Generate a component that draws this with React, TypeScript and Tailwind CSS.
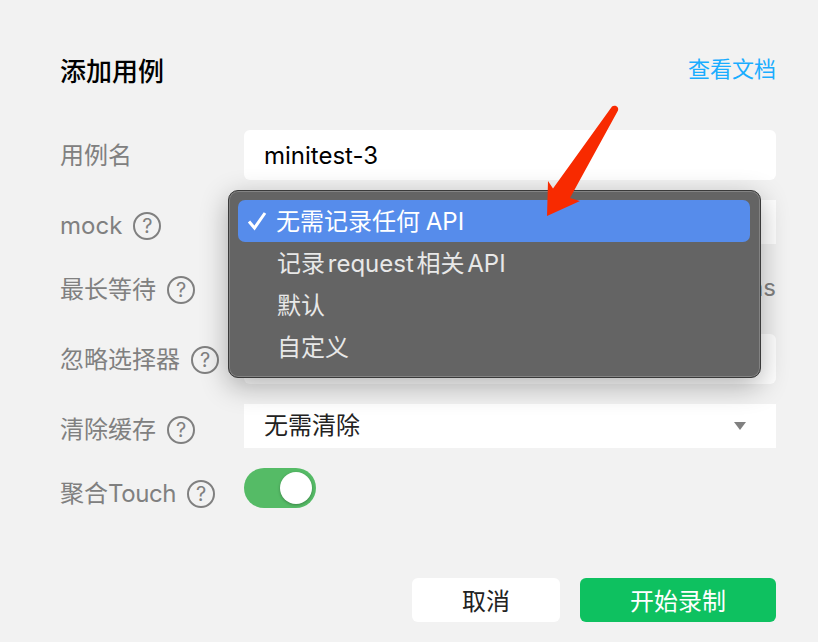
import type { ReactNode } from 'react'

const font = { fontFamily: 'Inter, "Noto Sans CJK SC", sans-serif' }

function Help() {
  return (
    <span className="ml-[11px] flex h-[28px] w-[28px] shrink-0 items-center justify-center rounded-full border-2 border-[#808080] text-[20px] leading-none text-[#808080]">
      ?
    </span>
  )
}

function Label({ text, help = true }: { text: ReactNode; help?: boolean }) {
  return (
    <div className="flex h-[50px] w-[184px] shrink-0 items-center whitespace-nowrap pt-[2px] text-[24px] text-[#808080]">
      <span>{text}</span>
      {help && <Help />}
    </div>
  )
}

function Arrow() {
  return (
    <svg className="absolute left-0 top-0" width="818" height="642" viewBox="0 0 818 642" fill="none">
      <path
        d="M612 106.5C614 104.5 619.5 106 618 110.5L570 198L580 201L547 216L548 181L553 188.5Z"
        fill="#f82a00"
      />
    </svg>
  )
}

function Menu() {
  const items = ['记录 request 相关 API', '默认', '自定义']
  return (
    <div className="absolute left-[228px] top-[190px] h-[188px] w-[533px] rounded-[10px] border border-[#3a3a3a] bg-[#646464] pb-[9px] pl-[9px] pr-[10px] pt-[9px] shadow-[0_8px_28px_rgba(0,0,0,0.3),inset_0_0_0_1px_rgba(255,255,255,0.2)]">
      <div className="flex h-[42px] items-center rounded-[7px] bg-[#568ceb] pt-[2px] text-[24px] text-white [word-spacing:-1px]">
        <svg className="mb-[2px] ml-[9px] mr-[9px]" width="20" height="20" viewBox="0 0 20 20" fill="none">
          <path d="M2 10.5L7.5 17L18 2" stroke="white" strokeWidth="3" />
        </svg>
        <span>无需记录任何 API</span>
      </div>
      {items.map((item) => (
        <div key={item} className="flex h-[42px] items-center pl-[39px] pt-[2px] text-[24px] text-[#e8e8e8] [word-spacing:-4px]">
          {item}
        </div>
      ))}
    </div>
  )
}

function App() {
  return (
    <div className="relative h-[642px] w-[818px] overflow-hidden bg-[#f2f2f2] pl-[60px] pr-[42px]" style={font}>
      <div className="flex h-[130px] items-start justify-between pt-[53px]">
        <h1 className="text-[26px] font-medium leading-[38px] text-black">添加用例</h1>
        <a className="text-[22px] leading-[32px] text-[#1aadff]">查看文档</a>
      </div>

      <div className="flex h-[50px] items-start">
        <Label text="用例名" help={false} />
        <div className="flex h-full flex-1 items-center rounded-[6px] bg-white pl-[20px] pt-[2px] text-[24px] text-black">minitest-3</div>
      </div>

      <div className="mt-[20px] flex h-[44px] items-start">
        <Label text="mock" />
        <div className="h-full flex-1 bg-white" />
      </div>

      <div className="mt-[20px] flex h-[50px] items-start">
        <Label text="最长等待" />
        <div className="flex-1 pt-[6px] text-right text-[24px] text-[#808080]">ms</div>
      </div>

      <div className="mt-[20px] flex h-[50px] items-start">
        <Label text="忽略选择器" />
        <div className="h-full flex-1 rounded-[6px] bg-white" />
      </div>

      <div className="mt-[20px] flex h-[44px] items-start">
        <Label text="清除缓存" />
        <div className="flex h-full flex-1 items-center justify-between bg-white pl-[20px] pr-[30px] text-[24px] text-[#222]">
          <span>无需清除</span>
          <span className="h-0 w-0 border-x-[6px] border-t-[8px] border-x-transparent border-t-[#808080]" />
        </div>
      </div>

      <div className="mt-[20px] flex h-[40px] items-start">
        <Label text={<>聚合<span className="tracking-[-0.4px]">Touch</span></>} />
        <div className="flex h-[40px] w-[72px] items-center justify-end rounded-full bg-[#55bb66] pr-[4px]">
          <span className="h-[32px] w-[32px] rounded-full bg-white shadow-[0_1px_3px_rgba(0,0,0,0.3)]" />
        </div>
      </div>

      <div className="mt-[70px] flex justify-end gap-[20px]">
        <button className="h-[44px] w-[148px] rounded-[6px] bg-white pt-[3px] text-[24px] text-[#222]">取消</button>
        <button className="h-[44px] w-[196px] rounded-[6px] bg-[#0ec160] pt-[3px] text-[24px] text-white">开始录制</button>
      </div>

      <Menu />
      <Arrow />
    </div>
  )
}

export default App
